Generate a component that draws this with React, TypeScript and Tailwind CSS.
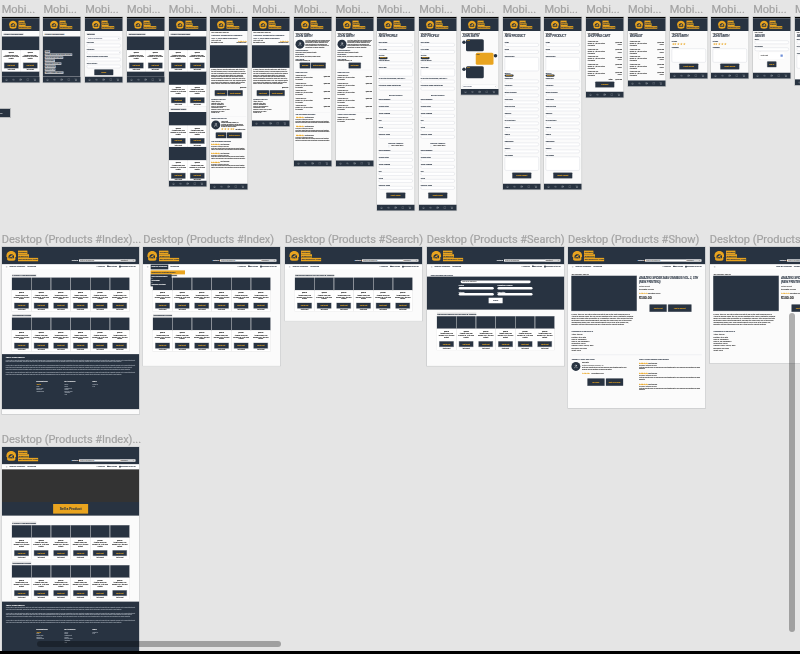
import type { ReactNode } from 'react';
import { Home, Menu, MessageSquare, PlusCircle, Search, ShoppingCart, User } from 'lucide-react';

const PRODUCT = 'Amazing Spider-Man Omnibus Vol. 1, 5th (New Printing)';
const LOREM =
  'In 1963, Stan Lee and Steve Ditko gave birth to one of the most enduring icons in American popular media: the shy and self-doubting Peter Parker, granted the amazing powers of a spider after being bitten by a radioactive arachnid. Peter learned that with great power comes great responsibility, and soon the world knew him as the friendly neighborhood Spider-Man. This omnibus collects every issue of the original run, complete with the letters pages and rare extras from the earliest printings.';
const SHORT = 'Great value and fast delivery. The book arrived in perfect condition and the seller answered all of my questions very quickly and politely.';

// logo mark + three orange name strips
function Logo({ large }: { large?: boolean }) {
  return (
    <div className={large ? 'flex items-center gap-[10px]' : 'flex items-center gap-[8px]'}>
      <svg viewBox="0 0 64 60" className={large ? 'h-[104px] w-[88px]' : 'h-[76px] w-[72px]'}>
        <path d="M4 30C4 11 18 2 32 2s28 9 28 28v7H4z" fill="#e9a41f" />
        <path d="M8 33h48v16c0 6-7 10-24 10S8 55 8 49z" fill="#e9a41f" />
        <path d="M16 31c3-6 9-10 16-10s13 4 16 10v12c-5 3-27 3-32 0z" fill="#283341" />
        <path d="M19 38l16-12 9 2-8 5 9 6-7 1-7-4-8 3z" fill="#e9a41f" />
      </svg>
      <div className={large ? 'flex flex-col items-start gap-[2px] text-[20px] font-bold leading-[27px] text-[#283341]' : 'flex flex-col items-start gap-[1px] text-[13px] font-bold leading-[21px] tracking-[-0.5px] text-[#283341]'}>
        <span className="bg-[#e9a41f] px-1">COMIC</span>
        <span className="bg-[#e9a41f] px-1">E-BOOK</span>
        <span className="bg-[#e9a41f] px-1">MARKETPLACE</span>
      </div>
    </div>
  );
}

function Title({ children }: { children: ReactNode }) {
  return <h2 className="inline bg-[#dcdcdc] px-[2px] text-[16px] font-bold uppercase leading-[20px] tracking-[-1px] text-[#283341]">{children}</h2>;
}

function ActionButton({ children, wide }: { children: ReactNode; wide?: boolean }) {
  return (
    <button className={wide ? 'h-[44px] min-w-[150px] rounded-sm bg-[#283341] px-4 text-[12px] font-bold text-[#e9a41f] shadow-[0_0_0_3px_#a9aeb3]' : 'h-[44px] rounded-sm bg-[#283341] px-4 text-[12px] font-bold text-[#e9a41f] shadow-[0_0_0_3px_#a9aeb3]'}>
      {children}
    </button>
  );
}

function ImageBlock({ tall }: { tall?: boolean }) {
  return <div className={tall ? 'h-[181px] bg-[#283341]' : 'h-[110px] bg-[#283341]'} />;
}

function ProductCard() {
  return (
    <div className="flex h-[168px] min-w-0 flex-col items-center bg-white px-2 pt-[10px] text-center shadow-[0_0_0_2px_#dedede]">
      <span className="text-[11px] font-bold text-black">$100.00</span>
      <p className="mt-[4px] h-[48px] text-[11px] leading-[15px] text-[#111]">{PRODUCT}</p>
      <div className="mt-[22px]">
        <button className="h-[42px] w-[112px] bg-[#283341] text-[11px] font-bold text-[#e9a41f] shadow-[0_0_0_3px_#a9aeb3]">Add to Cart</button>
      </div>
      <span className="mt-[6px] text-[9px] text-[#222]">Add to Wishlist</span>
    </div>
  );
}

function MobileProducts() {
  return (
    <div>
      <ImageBlock />
      <div className="grid grid-cols-2 gap-[3px]">
        <ProductCard />
        <ProductCard />
      </div>
    </div>
  );
}

function MobileFrame({ children }: { children: ReactNode }) {
  return (
    <div className="flex h-full flex-col bg-[#fbfbfb] shadow-[0_0_0_6px_rgba(120,125,130,0.35)]">
      <div className="h-[10px] shrink-0 bg-black" />
      <div className="flex h-[102px] shrink-0 items-center bg-[#283341] pl-[52px]">
        <Logo />
      </div>
      <div className="min-h-0 flex-1 overflow-hidden">{children}</div>
      <div className="flex h-[46px] shrink-0 items-center justify-around bg-[#283341] px-2 text-[#c9ced4]">
        <Home size={20} />
        <Search size={20} />
        <PlusCircle size={22} />
        <MessageSquare size={22} />
        <ShoppingCart size={22} />
      </div>
    </div>
  );
}

function Field({ label, tall, xl, select }: { label: string; tall?: boolean; xl?: boolean; select?: boolean }) {
  return (
    <div className="mb-[10px]">
      <div className="text-[12px] font-bold uppercase leading-[18px] tracking-[-0.5px] text-[#283341]">{label}</div>
      {xl ? (
        <div className="h-[112px] rounded-xl border-[3px] border-gray-300 bg-white" />
      ) : tall ? (
        <div className="h-[62px] rounded-xl border-[3px] border-gray-300 bg-white" />
      ) : (
        <div className="flex h-[28px] items-center justify-end rounded-full border-[3px] border-gray-300 bg-white px-2 text-[10px] text-gray-500">{select ? '▾' : ''}</div>
      )}
    </div>
  );
}

function Crumb({ children }: { children: ReactNode }) {
  return <div className="text-[9px] leading-[14px] text-[#333]">{children}</div>;
}

function FormHead({ crumb, title }: { crumb: string; title: string }) {
  return (
    <div className="mb-[24px] pt-[10px]">
      <Crumb>{crumb}</Crumb>
      <h2 className="mt-[3px] text-[24px] font-bold italic uppercase leading-[28px] tracking-[-1.5px] text-[#283341]">{title}</h2>
    </div>
  );
}

const ADDRESS = ['House Number', 'Street Name', 'Town / Suburb', 'City', 'State', 'Country Code'];

function ProfileForm({ crumb, button, title }: { crumb: string; button: string; title: string }) {
  return (
    <div className="px-[13px]">
      <FormHead crumb={crumb} title={title} />
      <Field label="First Name" />
      <Field label="Last Name" />
      <div className="text-[12px] font-bold uppercase leading-[16px] text-[#283341]">Avatar</div>
      <span className="mb-[2px] block w-[72px] rounded-full bg-[#283341] py-[2px] text-center text-[9px] font-bold text-[#e9a41f]">Choose File</span>
      <Field label="Date of Birth" />
      <Field label="Short Bio" tall />
      <Field label="If you are advertising, that will..." />
      <Field label="Favourite comic character" />
      <div className="mb-[14px] mt-[28px] text-center text-[12px] font-bold uppercase text-[#283341]">Billing Address</div>
      {ADDRESS.map((a) => (
        <Field key={a} label={a} />
      ))}
      <div className="mb-[6px] mt-[28px] text-center text-[12px] font-bold uppercase text-[#283341]">Shipping Address</div>
      <div className="mb-[14px] flex items-center justify-center gap-2 text-[9px] text-[#333]">
        <span className="h-[16px] w-[16px] border-2 border-gray-300 bg-white" />
        Same as Billing Address
      </div>
      {ADDRESS.map((a) => (
        <Field key={a} label={a} />
      ))}
      <div className="mt-[24px] flex justify-center">
        <ActionButton wide>{button}</ActionButton>
      </div>
    </div>
  );
}

const PRODUCT_FIELDS = ['Condition', 'Category', 'Manufacturer', 'Publisher', 'Publish Date', 'Writers', 'Illustrators', 'ISBN-10', 'ISBN-13', 'Dimensions', 'Weight'];

function ProductForm({ crumb, title, button }: { crumb: string; title: string; button: string }) {
  return (
    <div className="px-[13px]">
      <FormHead crumb={crumb} title={title} />
      <Field label="Name" />
      <Field label="Price" />
      <Field label="Description" xl />
      <div className="text-[12px] font-bold uppercase leading-[16px] text-[#283341]">Images</div>
      <span className="mb-[6px] block w-[72px] rounded-full bg-[#283341] py-[2px] text-center text-[9px] font-bold text-[#e9a41f]">Choose File</span>
      {PRODUCT_FIELDS.map((f) => (
        <Field key={f} label={f} />
      ))}
      <Field label="Keywords" xl />
      <div className="mt-[16px] flex justify-center">
        <ActionButton wide>{button}</ActionButton>
      </div>
    </div>
  );
}

function ItemRow({ remove }: { remove?: boolean }) {
  return (
    <div className="mb-[12px] flex justify-between gap-2">
      <div className="w-[190px] text-[9px] leading-[16px] text-[#333]">
        <div>Amazing Spider-Man</div>
        <div>Omnibus Vol. 1, 5th (New Printing)</div>
        <div>Item Condition</div>
      </div>
      <div className="text-right">
        <div className="text-[14px] font-bold text-[#222]">$100.00</div>
        {remove && <div className="mt-[6px] text-[9px] text-[#333]">Remove</div>}
      </div>
    </div>
  );
}

function Stars({ big }: { big?: boolean }) {
  return <span className={big ? 'text-[22px] leading-[26px] tracking-[2px] text-[#e9a41f]' : 'text-[13px] leading-[16px] tracking-[1px] text-[#e9a41f]'}>★★★★★</span>;
}

function Review() {
  return (
    <div className="mb-[14px]">
      <div className="flex items-center gap-2 text-[10px] font-bold text-[#333]">
        <Stars /> Great purchase
      </div>
      <div className="mt-[2px] text-[9px] leading-[14px] text-[#444]">Reviewed in Australia on May 2019</div>
      <p className="text-[9px] leading-[12px] text-[#333]">{SHORT}</p>
    </div>
  );
}

function SectionTitle({ children }: { children: ReactNode }) {
  return <h3 className="mb-[6px] text-[13px] font-bold uppercase italic tracking-[-0.5px] text-[#283341]">{children}</h3>;
}

function Avatar() {
  return (
    <div className="flex h-[72px] w-[72px] shrink-0 items-center justify-center rounded-full bg-[#283341] text-white">
      <User size={34} />
    </div>
  );
}

function DetailLines({ large }: { large?: boolean }) {
  return (
    <div className={large ? 'text-[12px] leading-[17.5px] text-[#333]' : 'text-[10px] leading-[12.5px] text-[#333]'}>
      <div>Author: Stan Lee</div>
      <div>Illustrator: Steve Ditko</div>
      <div>ISBN-10: 1302900668</div>
      <div>ISBN-13: 978-1302900663</div>
      <div>Manufacturer: Marvel</div>
      <div>Publisher: Marvel (May 17, 2016)</div>
      <div>Dimensions: 20 x 30cm</div>
      <div>Weight: 2.5 kg</div>
    </div>
  );
}

function MobileShow({ seller }: { seller?: boolean }) {
  return (
    <div className="px-[10px] pt-[8px]">
      <Crumb>Home / Comic Books / Spider-Man</Crumb>
      <h2 className="mt-[4px] text-[16px] font-bold uppercase leading-[20px] tracking-[-0.5px] text-[#283341]">Amazing Spider-Man Omnibus Vol. 1, 5th (New Printing)</h2>
      <div className="mt-[6px] flex items-center justify-between">
        <span className="text-[8px] text-[#555]">Posted by John Smith</span>
        <Stars />
      </div>
      <div className="flex justify-between text-[8px] leading-[12px] text-[#333]">
        <span>Item Condition: Very Good</span>
        <span>100 customer reviews</span>
      </div>
      <div className="-mx-[10px] mt-[14px]">
        <ImageBlock tall />
      </div>
      <p className="mt-[8px] text-[11px] leading-[14px] text-[#333]">{LOREM}</p>
      <div className="mt-[12px] text-right text-[14px] font-bold text-[#222]">$100.00</div>
      <div className="mt-[12px] flex justify-center gap-[6px]">
        <ActionButton>Add to Cart</ActionButton>
        <ActionButton>Add to Wishlist</ActionButton>
      </div>
      <div className="mt-[16px]">
        <SectionTitle>Product Details</SectionTitle>
        <DetailLines />
      </div>
      {seller && (
        <div>
          <div className="mt-[20px] border-t-2 border-gray-200 pt-[8px]">
            <SectionTitle>About the Seller</SectionTitle>
            <div className="flex gap-2">
              <Avatar />
              <div className="text-[8px] leading-[11px] text-[#333]">
                <div className="text-[10px] font-bold">John Smith</div>
                <div>Location: Collingwood, Melbourne, VIC</div>
                <p className="mt-[4px]">{SHORT}</p>
                <div className="flex items-center gap-1">
                  <Stars big />
                  <span>100 customer reviews</span>
                </div>
              </div>
            </div>
            <div className="mt-[12px] flex justify-center gap-[6px]">
              <ActionButton>Message</ActionButton>
              <ActionButton>Write a Review</ActionButton>
            </div>
          </div>
          <div className="mt-[18px]">
            <SectionTitle>Top Customer Reviews</SectionTitle>
            <Review />
            <Review />
            <Review />
          </div>
        </div>
      )}
    </div>
  );
}

function MobileProfile({ own }: { own?: boolean }) {
  return (
    <div className="px-[12px]">
      <div className="pb-[14px] pt-[10px]">
        <Crumb>Home / Sellers / John Smith</Crumb>
        <h2 className="mt-[3px] text-[24px] font-bold italic uppercase leading-[28px] tracking-[-1.5px] text-[#283341]">John Smith</h2>
      </div>
      <div className="flex gap-2">
        <Avatar />
        <p className="text-[9px] leading-[11px] text-[#333]">{SHORT} {SHORT}</p>
      </div>
      <div className="mt-[10px] text-[9px] leading-[13px] text-[#333]">
        <div className="text-[11px] font-bold uppercase text-[#283341]">Announcements</div>
        <div className="mb-[8px]">Comic Fair in Sydney, through next month</div>
        <div className="text-[11px] font-bold uppercase text-[#283341]">Favourites</div>
        <div className="mb-[8px]">Batman, Iron Man, The Punisher, Wonder Woman</div>
        <div className="text-[11px] font-bold uppercase text-[#283341]">Ships from</div>
        <div>Collingwood, Melbourne, VIC</div>
      </div>
      <div className="mb-[12px] mt-[8px] flex justify-center gap-[6px] border-b-2 border-gray-200 pb-[14px]">
        {own ? <ActionButton>Edit Profile</ActionButton> : <ActionButton>Message</ActionButton>}
        {!own && <ActionButton>Write a Review</ActionButton>}
      </div>
      <SectionTitle>Items on Sale</SectionTitle>
      {[0, 1, 2, 3, 4].map((i) => (
        <ItemRow key={i} />
      ))}
      {own ? (
        <div className="mt-[4px] border-t-2 border-gray-200 pt-[8px]">
          <SectionTitle>Your Latest Delivery</SectionTitle>
          <ItemRow />
        </div>
      ) : (
        <div className="border-t-2 border-gray-200 pt-[8px]">
          <SectionTitle>Top Customer Reviews</SectionTitle>
          <Review />
          <Review />
          <Review />
        </div>
      )}
    </div>
  );
}

function Bubble({ mine }: { mine?: boolean }) {
  return (
    <div className={mine ? 'mb-[12px] flex flex-row-reverse items-start gap-[2px]' : 'mb-[12px] flex items-start gap-[2px]'}>
      <div className="mt-[10px] h-[28px] w-[28px] shrink-0 rounded-full bg-[#283341]" />
      <div className={mine ? 'h-[96px] w-[142px] rounded-xl bg-[#e9a41f] p-2 text-[9px] text-[#283341]' : 'h-[96px] w-[142px] rounded-xl bg-[#283341] p-2 text-[9px] text-[#e9a41f]'}>Hello</div>
    </div>
  );
}

function MobileChat() {
  return (
    <div className="flex h-full flex-col px-[10px]">
      <div className="pb-[10px] pt-[10px]">
        <Crumb>Home / Conversations / John Smith</Crumb>
        <h2 className="mt-[3px] text-[24px] font-bold italic uppercase leading-[28px] tracking-[-1.5px] text-[#283341]">John Smith</h2>
      </div>
      <div className="min-h-0 flex-1">
        <Bubble />
        <Bubble mine />
        <Bubble />
      </div>
      <div className="mb-[6px] flex h-[30px] items-center justify-between rounded-full border-2 border-gray-300 bg-white px-2 text-[9px] text-gray-500">
        Type a message <span>➤</span>
      </div>
    </div>
  );
}

function MobileReview({ button }: { button: string }) {
  return (
    <div className="px-[13px]">
      <FormHead crumb="Home / John Smith" title="John Smith" />
      <div className="text-[12px] font-bold uppercase leading-[16px] text-[#283341]">Rating</div>
      <Stars big />
      <Field label="Comment" xl />
      <div className="mt-[6px] flex justify-center">
        <ActionButton wide>{button}</ActionButton>
      </div>
    </div>
  );
}

function MobileList({ crumb, title, cart }: { crumb: string; title: string; cart?: boolean }) {
  return (
    <div className="px-[13px]">
      <FormHead crumb={crumb} title={title} />
      {[0, 1, 2, 3, 4].map((i) => (
        <ItemRow key={i} remove />
      ))}
      {cart && (
        <div>
          <div className="flex justify-end gap-6 text-[14px] font-bold text-[#222]">
            <span>Total</span>
            <span>$100.00</span>
          </div>
          <div className="mt-[6px] flex justify-center">
            <ActionButton wide>Checkout</ActionButton>
          </div>
        </div>
      )}
    </div>
  );
}

const MENU_ITEMS = ['Home', 'Comic Books & Graphic Novels', 'Toys & Collectibles', 'Stationery', 'Stickers & Stamps', 'My Account', 'Contact Us', 'About Comic Ebooky'];

function MobileMenu() {
  return (
    <div className="flex h-full flex-col">
      <div className="h-[44px] px-[12px] pt-[12px]">
        <Title>Latest Advertising</Title>
      </div>
      <div className="flex flex-1 flex-col items-start gap-[6px] bg-[#283341] px-[14px] pt-[112px]">
        {MENU_ITEMS.map((m) => (
          <span key={m} className="bg-[#e6e6e6] px-[3px] text-[13px] font-bold uppercase leading-[18px] tracking-[-0.5px] text-[#283341]">{m}</span>
        ))}
      </div>
    </div>
  );
}

function MobileSearch() {
  return (
    <div className="px-[13px] pt-[12px]">
      <div className="mb-[10px]">
        <Title>Search</Title>
      </div>
      <div className="mb-[10px] flex h-[28px] items-center justify-between rounded-full border-[3px] border-gray-300 bg-white px-2 text-[10px] text-gray-500">
        What are you looking for? <Search size={14} />
      </div>
      <Field label="Location" />
      <Field label="Category" select />
      <Field label="Manufacturer / Publisher" />
      <Field label="Sales Status" />
      <div className="mt-[10px] flex justify-center">
        <ActionButton wide>Search</ActionButton>
      </div>
    </div>
  );
}

function MobileIndex({ title, tall }: { title: string; tall?: boolean }) {
  return (
    <div>
      <div className="h-[44px] px-[12px] pt-[12px]">
        <Title>{title}</Title>
      </div>
      <MobileProducts />
      {tall ? (
        <div>
          <MobileProducts />
          <div className="h-[48px] px-[12px] pt-[14px]">
            <Title>Trending Items</Title>
          </div>
          <MobileProducts />
          <MobileProducts />
        </div>
      ) : (
        <div className="h-[60px] bg-[#283341]" />
      )}
    </div>
  );
}

function MobileAuth({ title, button, signUp }: { title: string; button: string; signUp?: boolean }) {
  return (
    <div className="px-[13px] pt-[8px]">
      <Crumb>Home / Account</Crumb>
      <h2 className="mb-[8px] text-[24px] font-bold italic uppercase leading-[28px] tracking-[-1.5px] text-[#283341]">{title}</h2>
      <Field label="Email" />
      <Field label="Password" />
      {signUp && <Field label="Address" xl />}
      <div className="mx-auto mt-[6px] flex h-[54px] w-[200px] items-center justify-between bg-white px-3 text-[9px] text-[#555] shadow-[0_0_6px_#aaa]">
        I'm not a robot <span className="h-[18px] w-[18px] bg-[#6f8fd8]" />
      </div>
      <div className="mt-[20px] flex justify-center">
        <ActionButton>{button}</ActionButton>
      </div>
    </div>
  );
}

function DesktopHeader() {
  return (
    <div className="flex h-[139px] items-end justify-between bg-[#283341] px-[30px] pb-[16px]">
      <Logo large />
      <div className="flex items-center gap-[8px] pb-[6px] text-[12px] font-bold text-white">
        SEARCH
        <div className="flex h-[18px] w-[452px] items-center justify-between bg-white pl-2 pr-1 text-[10px] font-normal text-[#666]">
          What are you looking for?
          <span className="flex w-[120px] justify-between bg-[#d6d6d6] px-2">Department <Search size={12} /></span>
        </div>
      </div>
    </div>
  );
}

function DesktopNav({ open, compact }: { open?: boolean; compact?: boolean }) {
  return (
    <div className="flex h-[40px] items-center justify-between bg-white px-[30px] text-[13px] font-bold uppercase tracking-[-0.5px] text-[#283341]">
      <div className="flex h-full items-center gap-[16px]">
        <Menu size={14} />
        {!compact && <span className={open ? 'flex h-full items-center bg-[#283341] px-2 text-white' : ''}>Shop by Category</span>}
        {!compact && <span>Advertise</span>}
      </div>
      <div className="flex items-center gap-[14px]">
        {compact && <span>Shop by Category</span>}
        {compact && <span>Advertise</span>}
        <span>☺ Profile</span>
        <span>✉ Messages</span>
        <span>▣ Shopping Cart (0)</span>
      </div>
    </div>
  );
}

function ProductRow({ title }: { title: string }) {
  return (
    <div className="mb-[22px]">
      <div className="mb-[4px]">
        <h2 className="inline bg-[#dddddd] px-[2px] text-[20px] font-bold uppercase italic leading-[22px] tracking-[-1.5px] text-[#283341]">{title}</h2>
      </div>
      <div className="grid grid-cols-6 gap-[5px]">
        {[0, 1, 2, 3, 4, 5].map((i) => (
          <div key={i}>
            <div className="h-[101px] bg-[#283341] shadow-[0_0_0_2px_#9a9fa5]" />
            <ProductCard />
          </div>
        ))}
      </div>
    </div>
  );
}

function Footer() {
  return (
    <div className="mt-[10px] h-[440px] bg-[#283341] px-[30px] pt-[18px] text-white">
      <h3 className="text-[13px] font-bold uppercase">About Comic Ebooky</h3>
      <p className="mt-[6px] text-[9px] leading-[13px] text-[#99a1ab]">{LOREM}</p>
      <p className="mt-[18px] text-[9px] leading-[13px] text-[#99a1ab]">{LOREM} {SHORT} {SHORT}</p>
      <p className="mt-[18px] text-[9px] leading-[13px] text-[#99a1ab]">{LOREM}</p>
      <div className="mt-[42px] grid grid-cols-[225px_224px_200px] pl-[245px] text-[9px] leading-[13px] text-[#99a1ab]">
        <div>
          <div className="mb-[14px] text-[13px] font-bold uppercase text-white">Information</div>
          <div className="text-[#e9a41f]">About Us</div>
          <div>Terms</div>
          <div>Privacy Policy</div>
          <div>Contact Us</div>
          <div>Shipping Policy</div>
        </div>
        <div>
          <div className="mb-[14px] text-[13px] font-bold uppercase text-white">My Account</div>
          <div>Sign In</div>
          <div>Orders</div>
          <div>Shopping Cart</div>
          <div>Wishlist</div>
          <div>Track My Order</div>
          <div>Advertising</div>
          <div>Help</div>
        </div>
        <div>
          <div className="mb-[14px] text-[13px] font-bold uppercase text-white">Help</div>
          <div>Contact Us</div>
          <div>FAQ</div>
        </div>
      </div>
    </div>
  );
}

function DesktopFrame({ children }: { children: ReactNode }) {
  return <div className="h-full overflow-hidden bg-[#fbfbfb] shadow-[0_0_0_5px_rgba(120,125,130,0.3)]">{children}</div>;
}

function DesktopIndex({ footer, dropdown }: { footer?: boolean; dropdown?: boolean }) {
  return (
    <DesktopFrame>
      <div className="relative">
        <DesktopHeader />
        <DesktopNav open={dropdown} />
        {dropdown && (
          <div className="absolute left-[59px] top-[179px] z-10 w-[277px] text-[11px] font-bold uppercase leading-[32px] text-white">
            <div className="mt-[8px] bg-[#e9a41f] px-2 text-[#283341]">Comic Books & Graphic Novels</div>
            <div className="w-[170px] bg-[#283341] px-2">Toys & Collectibles</div>
            <div className="w-[170px] bg-[#283341] px-2">Stationery</div>
            <div className="w-[170px] bg-[#283341] px-2">Stickers & Stamps</div>
          </div>
        )}
        <div className="mx-[80px] pt-[38px]">
          <ProductRow title="Latest Advertising" />
          <ProductRow title="Trending Items" />
        </div>
        {footer && <Footer />}
      </div>
    </DesktopFrame>
  );
}

function DesktopHome() {
  return (
    <DesktopFrame>
      <DesktopHeader />
      <DesktopNav />
      <div className="h-[261px] bg-[#333333]" />
      <div className="flex h-[109px] items-center justify-center bg-[#283341]">
        <button className="h-[77px] w-[280px] bg-[#e9a41f] text-[26px] font-bold text-[#283341]">Sell a Product</button>
      </div>
      <div className="mx-[80px] mt-[10px] pt-[38px]">
        <ProductRow title="Latest Advertising" />
        <ProductRow title="Trending Items" />
      </div>
      <Footer />
    </DesktopFrame>
  );
}

function DesktopResults() {
  return (
    <DesktopFrame>
      <DesktopHeader />
      <DesktopNav />
      <div className="mx-[80px] pt-[38px]">
        <ProductRow title="Search Results (Stamp & Items)" />
      </div>
    </DesktopFrame>
  );
}

function DesktopAdvanced() {
  return (
    <DesktopFrame>
      <DesktopHeader />
      <DesktopNav />
      <div className="px-[27px] pt-[36px]">
        <h2 className="text-[20px] font-bold uppercase italic leading-[22px] tracking-[-1.5px] text-[#283341]">Advanced Search</h2>
      </div>
      <div className="flex h-[264px] flex-col items-center bg-[#283341] pt-[30px] text-[11px] text-white">
        <div className="h-[22px] w-[560px] rounded-full bg-white px-3 text-[10px] leading-[22px] text-[#666]">What are you looking for?</div>
        <div className="mt-[14px] grid w-[590px] grid-cols-2 gap-x-[30px] gap-y-[12px]">
          {['Location', 'Manufacturer / Publisher', 'Category', 'Sales Status'].map((l) => (
            <div key={l}>
              {l}
              <div className="h-[20px] rounded-full bg-white" />
            </div>
          ))}
        </div>
        <button className="mt-[18px] h-[44px] w-[112px] bg-white text-[12px] font-bold text-[#283341]">Search</button>
      </div>
      <div className="mx-[80px] pt-[24px]">
        <ProductRow title="Search Results (Stamp & Items)" />
      </div>
    </DesktopFrame>
  );
}

function ShowButton({ children, big }: { children: ReactNode; big?: boolean }) {
  return <button className={big ? 'h-[58px] w-[186px] rounded-sm bg-[#283341] text-[13px] font-bold text-[#e9a41f] shadow-[0_0_0_3px_#a9aeb3]' : 'h-[58px] w-[136px] rounded-sm bg-[#283341] text-[13px] font-bold text-[#e9a41f] shadow-[0_0_0_3px_#a9aeb3]'}>{children}</button>;
}

function DesktopShow({ seller, compact }: { seller?: boolean; compact?: boolean }) {
  return (
    <DesktopFrame>
      <DesktopHeader />
      <DesktopNav compact={compact} />
      <div className="px-[27px] pt-[36px]">
        <Crumb>Home / Comic Books / Spider-Man</Crumb>
        <div className="grid grid-cols-[523px_1fr] gap-[18px] pt-[2px]">
          <div>
            <div className="h-[280px] bg-[#283341] shadow-[0_0_0_2px_#9a9fa5]" />
            <p className="mt-[22px] w-[500px] text-[13px] leading-[16px] text-[#333]">{LOREM}</p>
            <div className="mt-[34px]">
              <h3 className="mb-[10px] text-[20px] font-bold uppercase italic leading-[22px] tracking-[-1px] text-[#283341]">Product Details</h3>
              <DetailLines large />
            </div>
          </div>
          <div>
            <h2 className="text-[23px] font-bold uppercase italic leading-[34px] tracking-[-1px] text-[#283341]">Amazing Spider-Man Omnibus Vol. 1, 5th (New Printing)</h2>
            <div className="mt-[12px] text-[9px] leading-[14px] text-[#555]">Posted by John Smith</div>
            <div className="mt-[12px] text-[10px] leading-[14px] text-[#333]">Item Condition: Very Good</div>
            <div className="mt-[12px] flex items-center gap-2 text-[10px] text-[#333]">
              <Stars /> 100 customer reviews
            </div>
            <div className="mt-[14px] text-[28px] font-bold leading-[34px] text-[#222]">$100.00</div>
            <div className="mt-[32px] flex justify-center gap-[12px]">
              <ShowButton>Add to Cart</ShowButton>
              <ShowButton big>Add to Wishlist</ShowButton>
            </div>
          </div>
        </div>
        {seller && (
          <div className="mt-[26px] grid grid-cols-[541px_1fr] border-t-4 border-gray-200 pt-[22px]">
            <div>
              <h3 className="mb-[10px] text-[20px] font-bold uppercase italic leading-[22px] tracking-[-1px] text-[#283341]">About the Seller</h3>
              <div className="flex gap-3">
                <Avatar />
                <div className="w-[400px] text-[10px] leading-[13px] text-[#333]">
                  <div className="font-bold">John Smith</div>
                  <div className="mt-[8px] text-[#666]">Location: Collingwood, Melbourne, VIC</div>
                  <p className="mt-[8px]">{SHORT}</p>
                  <div className="mt-[14px] flex items-center gap-3">
                    <Stars />
                    <span>100 customer reviews</span>
                  </div>
                </div>
              </div>
              <div className="mt-[34px] flex justify-center gap-[12px]">
                <ShowButton>Message</ShowButton>
                <ShowButton>Write a Review</ShowButton>
              </div>
            </div>
            <div>
              <h3 className="mb-[14px] text-[20px] font-bold uppercase italic leading-[22px] tracking-[-1px] text-[#283341]">Top Customer Reviews</h3>
              <div className="flex flex-col gap-[14px]">
                <Review />
                <Review />
                <Review />
              </div>
            </div>
          </div>
        )}
      </div>
    </DesktopFrame>
  );
}

const MOBILE_SCREENS: { h: number; node: ReactNode }[] = [
  { h: 524, node: <MobileIndex title="Latest Advertising" /> },
  { h: 524, node: <MobileMenu /> },
  { h: 524, node: <MobileSearch /> },
  { h: 524, node: <MobileIndex title="Search Results" /> },
  { h: 1356, node: <MobileIndex title="Latest Advertising" tall /> },
  { h: 1380, node: <MobileShow seller /> },
  { h: 874, node: <MobileShow /> },
  { h: 1194, node: <MobileProfile /> },
  { h: 1194, node: <MobileProfile own /> },
  { h: 1548, node: <ProfileForm crumb="Home / Sign Up" title="New Profile" button="Create Profile" /> },
  { h: 1548, node: <ProfileForm crumb="Home / My Account" title="Edit Profile" button="Update Profile" /> },
  { h: 622, node: <MobileChat /> },
  { h: 1380, node: <ProductForm crumb="Home / Sell" title="New Product" button="Create Product" /> },
  { h: 1380, node: <ProductForm crumb="Home / Edit" title="Edit Product" button="Update Product" /> },
  { h: 644, node: <MobileList crumb="Home / Shopping Cart" title="Shopping Cart" cart /> },
  { h: 554, node: <MobileList crumb="Home / Wishlist" title="Wishlist" /> },
  { h: 492, node: <MobileReview button="Create Review" /> },
  { h: 492, node: <MobileReview button="Update Review" /> },
  { h: 492, node: <MobileAuth title="Sign In" button="Sign In" /> },
  { h: 545, node: <MobileAuth title="Sign Up" button="Sign Up" signUp /> },
];

const DESKTOP_SCREENS: { x: number; y: number; h: number; label: string; node: ReactNode }[] = [
  { x: 1.7, y: 247, h: 1336, label: 'Desktop (Products #Index)...', node: <DesktopIndex footer /> },
  { x: 143.3, y: 247, h: 950, label: 'Desktop (Products #Index)', node: <DesktopIndex dropdown /> },
  { x: 285, y: 247, h: 590, label: 'Desktop (Products #Search)', node: <DesktopResults /> },
  { x: 426.7, y: 247, h: 950, label: 'Desktop (Products #Search)', node: <DesktopAdvanced /> },
  { x: 568, y: 247, h: 1288, label: 'Desktop (Products #Show)', node: <DesktopShow seller /> },
  { x: 709.7, y: 247, h: 930, label: 'Desktop (Products #Show)', node: <DesktopShow compact /> },
  { x: 1.7, y: 447, h: 1640, label: 'Desktop (Products #Index)...', node: <DesktopHome /> },
];

// a screen on the canvas: drawn at full size, shown at the canvas zoom of 12.5%
function Artboard({ x, y, w, h, label, children }: { x: number; y: number; w: number; h: number; label: string; children: ReactNode }) {
  return (
    <>
      <span className="absolute whitespace-nowrap text-[11px] leading-[16px] text-[#a3a3a3] font-['Roboto',sans-serif] [-webkit-text-stroke:0.2px]" style={{ left: x, top: y < 100 ? y - 14.5 : y - 15.5 }}>
        {label}
      </span>
      <div className="absolute origin-top-left scale-[0.125] [-webkit-text-stroke:0.5px]" style={{ left: x, top: y, width: w, height: h }}>
        {children}
      </div>
    </>
  );
}

export default function App() {
  return (
    <div className="relative h-[654px] w-[800px] overflow-hidden bg-[#e5e5e5] font-['Liberation_Sans',Arial,sans-serif]">
      <div className="absolute inset-0 blur-[0.3px]">
        {MOBILE_SCREENS.map((s, i) => (
          <Artboard key={i} x={1.7 + 41.75 * i} y={16.5} w={300} h={s.h} label="Mobi...">
            <MobileFrame>{s.node}</MobileFrame>
          </Artboard>
        ))}
        {DESKTOP_SCREENS.map((s, i) => (
          <Artboard key={i} x={s.x} y={s.y} w={1098} h={s.h} label={s.label}>
            {s.node}
          </Artboard>
        ))}
        {/* frame cut off by the left edge of the canvas */}
        <div className="absolute left-0 top-[109px] flex h-[8px] w-[10px] items-center bg-[#283341] text-[2px] text-white shadow-[0_0_0_1px_rgba(120,125,130,0.4)]">Ok</div>
      </div>
      {/* canvas scrollbars */}
      <div className="absolute left-[37px] top-[641px] h-[6px] w-[244px] rounded-full bg-black/30" />
      <div className="absolute left-[789px] top-[313px] h-[319px] w-[6px] rounded-full bg-black/30" />
      <div className="absolute bottom-0 left-0 h-[3px] w-full bg-black" />
    </div>
  );
}
